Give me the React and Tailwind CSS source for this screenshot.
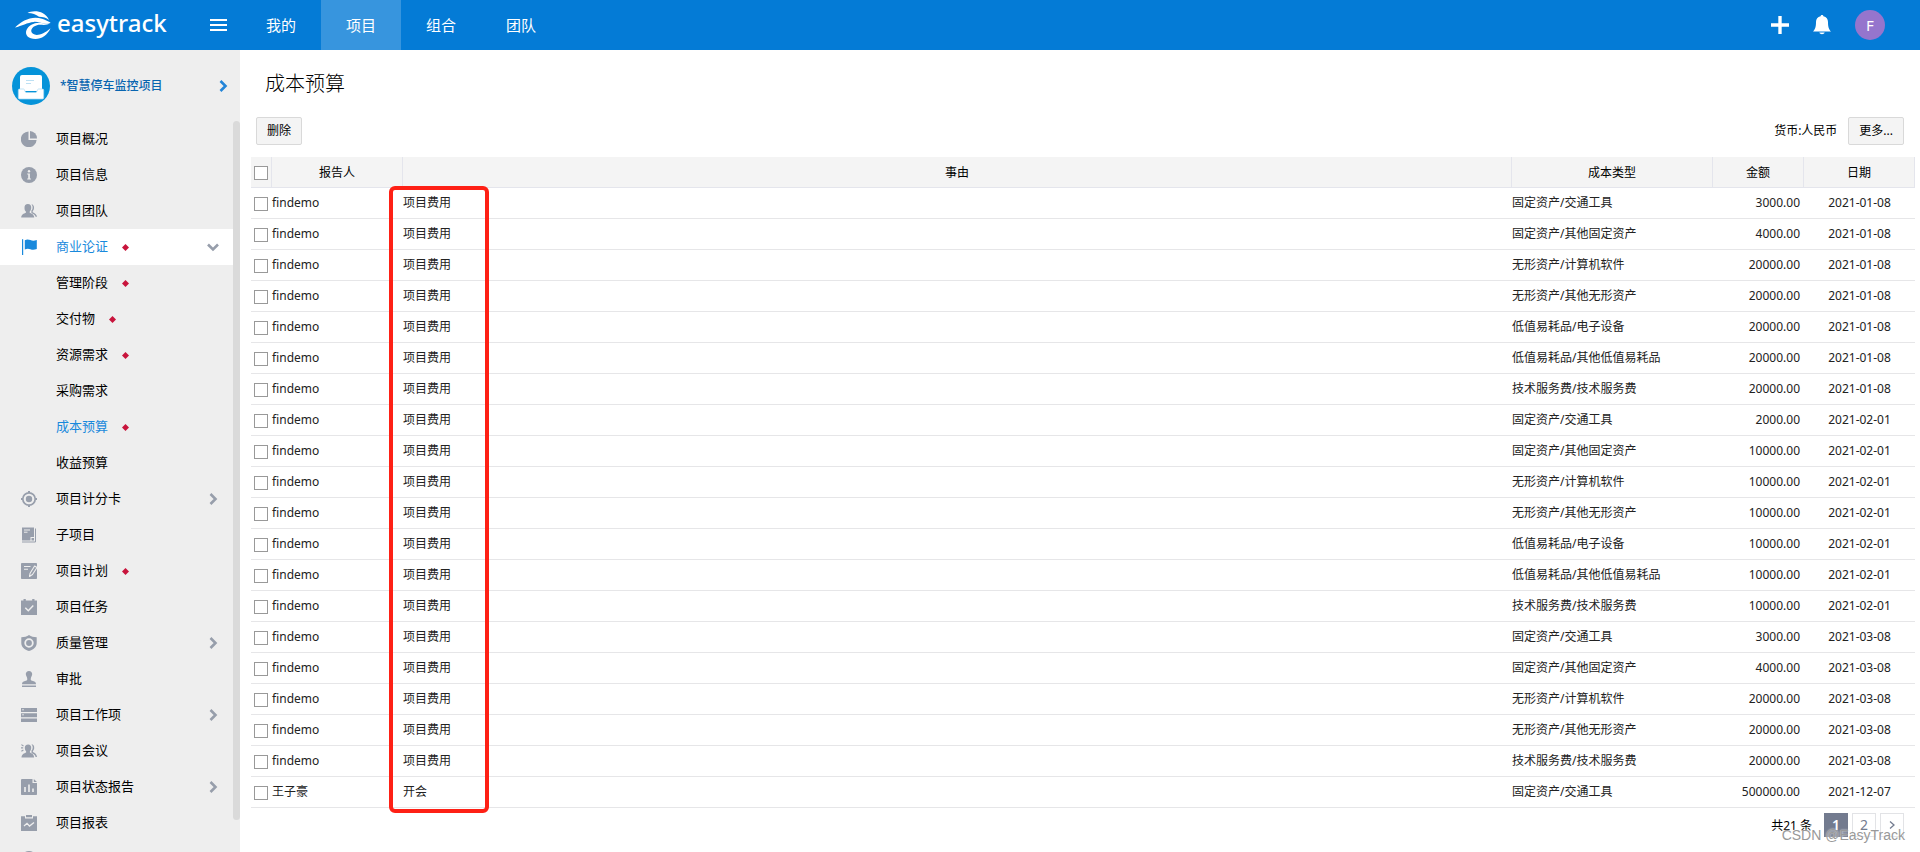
import clsx from 'clsx';

const topNav = [
  { label: '我的' },
  { label: '项目', active: true },
  { label: '组合' },
  { label: '团队' }
];

const sideMenu = [
  { label: '项目概况', icon: PieIcon },
  { label: '项目信息', icon: InfoIcon },
  { label: '项目团队', icon: TeamIcon },
  { label: '商业论证', icon: FlagIcon, dot: true, open: true },
  { label: '管理阶段', dot: true },
  { label: '交付物', dot: true },
  { label: '资源需求', dot: true },
  { label: '采购需求' },
  { label: '成本预算', dot: true, active: true },
  { label: '收益预算' },
  { label: '项目计分卡', icon: TargetIcon, more: true },
  { label: '子项目', icon: NoteIcon },
  { label: '项目计划', icon: PlanIcon, dot: true },
  { label: '项目任务', icon: TaskIcon },
  { label: '质量管理', icon: ShieldIcon, more: true },
  { label: '审批', icon: StampIcon },
  { label: '项目工作项', icon: StackIcon, more: true },
  { label: '项目会议', icon: MeetingIcon },
  { label: '项目状态报告', icon: ReportIcon, more: true },
  { label: '项目报表', icon: ClipboardIcon }
];

const rows = [
  ['findemo', '项目费用', '固定资产/交通工具', '3000.00', '2021-01-08'],
  ['findemo', '项目费用', '固定资产/其他固定资产', '4000.00', '2021-01-08'],
  ['findemo', '项目费用', '无形资产/计算机软件', '20000.00', '2021-01-08'],
  ['findemo', '项目费用', '无形资产/其他无形资产', '20000.00', '2021-01-08'],
  ['findemo', '项目费用', '低值易耗品/电子设备', '20000.00', '2021-01-08'],
  ['findemo', '项目费用', '低值易耗品/其他低值易耗品', '20000.00', '2021-01-08'],
  ['findemo', '项目费用', '技术服务费/技术服务费', '20000.00', '2021-01-08'],
  ['findemo', '项目费用', '固定资产/交通工具', '2000.00', '2021-02-01'],
  ['findemo', '项目费用', '固定资产/其他固定资产', '10000.00', '2021-02-01'],
  ['findemo', '项目费用', '无形资产/计算机软件', '10000.00', '2021-02-01'],
  ['findemo', '项目费用', '无形资产/其他无形资产', '10000.00', '2021-02-01'],
  ['findemo', '项目费用', '低值易耗品/电子设备', '10000.00', '2021-02-01'],
  ['findemo', '项目费用', '低值易耗品/其他低值易耗品', '10000.00', '2021-02-01'],
  ['findemo', '项目费用', '技术服务费/技术服务费', '10000.00', '2021-02-01'],
  ['findemo', '项目费用', '固定资产/交通工具', '3000.00', '2021-03-08'],
  ['findemo', '项目费用', '固定资产/其他固定资产', '4000.00', '2021-03-08'],
  ['findemo', '项目费用', '无形资产/计算机软件', '20000.00', '2021-03-08'],
  ['findemo', '项目费用', '无形资产/其他无形资产', '20000.00', '2021-03-08'],
  ['findemo', '项目费用', '技术服务费/技术服务费', '20000.00', '2021-03-08'],
  ['王子豪', '开会', '固定资产/交通工具', '500000.00', '2021-12-07']
];

/* ---------- icons ---------- */

function Svg({ children, className = 'size-4' }) {
  return (
    <svg viewBox="0 0 16 16" className={clsx('shrink-0', className)} fill="currentColor" aria-hidden="true">
      {children}
    </svg>
  );
}

function PieIcon() {
  return (
    <Svg>
      <path d="M7.5 0.4A7.9 7.9 0 1 0 15.6 8.9H7.5Z" />
      <path d="M9 0A7.6 7.6 0 0 1 16 7.4H9Z" />
    </Svg>
  );
}

function InfoIcon() {
  return (
    <Svg>
      <circle cx="8" cy="8" r="8" />
      <circle cx="8" cy="4.2" r="1.2" fill="#eee" />
      <path d="M6.2 6.6h2.7v5h1v1H6.2v-1h1v-4h-1z" fill="#eee" />
    </Svg>
  );
}

function TeamIcon() {
  return (
    <Svg>
      <path d="M6.9 1C9.2 1 10.4 2.6 10.2 4.9c-.1 1.700-.8 2.900-1.500 3.600v1.300c1.900.8 4.500 1.900 4.500 4.700H.2c0-2.800 2.700-3.900 4.700-4.700V8.500C4.100 7.800 3.500 6.600 3.500 4.900 3.400 2.600 4.600 1 6.900 1Z" />
      <path d="M10.300 1.200c1.900.2 2.900 1.600 2.700 3.700-.1 1.500-.6 2.500-1.300 3.200v1.100c2 1 4.100 2 4.300 4.500h-1.400c-.4-2-2.400-2.900-4.200-3.700V7.600c.8-.7 1.200-1.700 1.200-3 .1-1.500-.4-2.700-1.300-3.400Z" />
    </Svg>
  );
}

function FlagIcon() {
  return (
    <Svg>
      <path d="M1 .2h1.200V16H1zM3.800 1.200c2-1.200 3.800-.9 5.600-.1 1.900.8 3.800.8 6.400 0v9c-2.600 1-4.500.9-6.400.2-1.800-.8-3.600-.9-5.600.3Z" />
    </Svg>
  );
}

function TargetIcon() {
  return (
    <Svg>
      <circle cx="8" cy="8" r="6.200" fill="none" stroke="currentColor" strokeWidth="1.700" />
      <circle cx="8" cy="8" r="3.200" />
      <path d="M7 0h2v2H7zM7 14h2v2H7zM0 7h2v2H0zM14 7h2v2h-2z" />
    </Svg>
  );
}

function NoteIcon() {
  return (
    <Svg>
      <path d="M1 .5h12v9.500H9.500v3.500H1z" />
      <path d="M10.500 13.500h2.500V11h-2.500z" />
      <path d="M3 3h6M3 5.200h3.500" stroke="#eee" strokeWidth="1" />
      <path d="M1 15h13.500V1.500" fill="none" stroke="currentColor" strokeWidth="1" />
    </Svg>
  );
}

function PlanIcon() {
  return (
    <Svg>
      <rect width="16" height="16" rx="0.800" />
      <path d="M3 3.500h6.500M3 6.200h4" stroke="#eee" strokeWidth="1.100" />
      <path d="m8.500 13.500.6-3.300L13.600 3l2.400 1.500-4.500 7z" fill="currentColor" stroke="#eee" strokeWidth="1.100" strokeLinejoin="round" />
    </Svg>
  );
}

function TaskIcon() {
  return (
    <Svg>
      <path d="M2.500 0h2.300v1.600h6.400V0h2.300v1.600H16V4H0V1.600h2.500zM0 4h16v12H0z" />
      <path d="m4.300 8.800 3 3 5-5.200" fill="none" stroke="#eee" strokeWidth="1.500" />
    </Svg>
  );
}

function ShieldIcon() {
  return (
    <Svg>
      <path d="M8 0c2.100 1.400 4.700 2.200 7.700 2.300V8c0 4.100-3.200 6.600-7.700 8C3.500 14.600.3 12.100.3 8V2.300C3.300 2.200 5.900 1.400 8 0Z" />
      <circle cx="8" cy="8" r="3.800" fill="none" stroke="#eee" strokeWidth="1.800" />
    </Svg>
  );
}

function StampIcon() {
  return (
    <Svg>
      <path d="M8 0c2 0 3.200 1.400 3.200 3.100 0 1.900-1.500 3-1.500 5.100 0 1.200 1 1.500 2.300 1.900 1.900.6 3 1.200 3 3.200H1c0-2 1.100-2.600 3-3.200 1.300-.4 2.300-.7 2.300-1.900 0-2.100-1.500-3.200-1.500-5.100C4.800 1.400 6 0 8 0ZM1 14.600h14V16H1z" />
    </Svg>
  );
}

function StackIcon() {
  return (
    <Svg>
      <path d="M0 1h16v4H0zM0 6.200h16v4H0zM0 11.400h16v3.600H0z" />
      <path d="M1.200 2.800h1.600M1.200 7.800h1.600" stroke="#eee" strokeWidth="1" />
    </Svg>
  );
}

function MeetingIcon() {
  return (
    <Svg>
      <path d="M7.200 1.500c2 0 3.200 1.400 3 3.500-.1 1.500-.6 2.600-1.300 3.300v1.200c1.700.8 4.200 1.800 4.200 5H.5c0-3.200 2.900-4.200 4.600-5V8.300c-.7-.7-1.200-1.800-1.300-3.300-.2-2.100 1.300-3.500 3.400-3.500Z" />
      <path d="M10.300 1.300c2 .1 3.100 1.600 2.900 3.700-.1 1.400-.6 2.400-1.300 3.100v1c2 .9 4 2.300 4.100 5h-1.400c-.3-2.500-2.200-3.300-4.100-4.200V7.600c.7-.7 1.100-1.700 1.200-2.900 0-1.500-.4-2.700-1.400-3.400Z" />
      <path d="M.4 1.600 2.500 3M0 4.900h2.200M.4 8.200l2-1.200" stroke="currentColor" strokeWidth="1.100" />
    </Svg>
  );
}

function ReportIcon() {
  return (
    <Svg>
      <path d="M1 0h10.500v4H16v11.200a.8.8 0 0 1-.8.800H.8a.8.8 0 0 1-.8-.8V1a1 1 0 0 1 1-1ZM12.800 0 16 2.900h-3.200z" />
      <path d="M4 13V8M8 13V5.500M12 13V9.500" stroke="#eee" strokeWidth="1.600" />
    </Svg>
  );
}

function ClipboardIcon() {
  return (
    <Svg>
      <path d="M0 1.200h4v2.300h8V1.200h4V16H0zM5 0h6v2.300H5z" />
      <path d="m3 11 3-2.700 2.500 2.700 4.500-3.500" fill="none" stroke="#eee" strokeWidth="1.300" />
    </Svg>
  );
}

function Chevron({ className }) {
  return (
    <svg viewBox="0 0 12 12" className={clsx('size-3 shrink-0', className)} fill="none" stroke="currentColor" strokeWidth="2.600" aria-hidden="true">
      <path d="m3.500 1 5 5-5 5" />
    </svg>
  );
}

function Diamond() {
  return (
    <svg viewBox="0 0 7 7" className="size-[7px] ml-3.5 text-[#c8143c]" fill="currentColor" aria-hidden="true">
      <path d="M3.500 0 7 3.500 3.500 7 0 3.500z" />
    </svg>
  );
}

function Logo() {
  return (
    <a href="#" className="flex items-center gap-1.5 text-white">
      <svg viewBox="0 0 36 28" className="w-9 h-7" fill="currentColor" aria-hidden="true">
        <path d="M12.500 2C17-1 30-1.200 34 9c-2.500-2.500-6-3-10-3.200C21 3.600 17 1.900 12.500 2Z" />
        <path d="M0 16.500C7 9.500 17 4.500 27 7.800c3 .9 5.500 2.500 8.700 3.600C30 14.800 25 10.500 19 10.900 12 11.500 7 14.800 0 16.500Z" />
        <path d="M35.500 12.200c-5 3-9.500.8-13.500 2-5.500 1.500-7.500 6-4 8.600 3.500 2.500 10.500.7 17.500-5.600C32.500 24 26.500 28 20.500 28 13.500 28 9.500 24 11.500 19c2-4.500 7-7.200 12.500-7.300 4 0 7 1.500 11.500.5Z" />
      </svg>
      <span className="pb-1 text-2xl leading-7 font-medium">easytrack</span>
    </a>
  );
}

/* ---------- layout ---------- */

function TopBar() {
  return (
    <header className="flex h-[50px] shrink-0 bg-[#047bd6] text-white">
      <div className="flex w-[241px] shrink-0 items-center justify-between pr-3.5 pl-[15px]">
        <Logo />
        <button type="button" aria-label="菜单" className="flex w-[17px] flex-col gap-[3px]">
          <span className="h-0.5 bg-white" />
          <span className="h-0.5 bg-white" />
          <span className="h-0.5 bg-white" />
        </button>
      </div>
      <nav className="flex">
        {topNav.map((item) => (
          <a
            key={item.label}
            href="#"
            className={clsx('flex w-20 items-center justify-center text-[15px]', item.active && 'bg-[#3795de]')}
          >
            {item.label}
          </a>
        ))}
      </nav>
      <div className="ml-auto flex items-center gap-6 pr-[35px]">
        <button type="button" aria-label="新建">
          <Svg className="size-[18px]">
            <path d="M6.500 0h3v6.500H16v3H9.500V16h-3V9.500H0v-3h6.500z" />
          </Svg>
        </button>
        <button type="button" aria-label="通知">
          <svg viewBox="0 0 18 20" className="h-5 w-[18px]" fill="currentColor" aria-hidden="true">
            <path d="M9 0c.8 0 1.300.5 1.400 1.200C13.500 1.900 15 4.200 15 7c0 5 .8 7.200 3 9.500H0C2.200 14.200 3 12 3 7c0-2.800 1.500-5.100 4.600-5.800C7.700.5 8.200 0 9 0ZM6.300 17.500h5.400c-.4 1-1.400 1.700-2.700 1.700s-2.300-.7-2.700-1.700Z" />
          </svg>
        </button>
        <button type="button" className="size-[30px] rounded-full bg-[#9575cd] text-[15px] leading-[30px]">
          F
        </button>
      </div>
    </header>
  );
}

function MenuItem({ label, icon: Icon, dot, open, active, more }) {
  return (
    <li>
      <a
        href="#"
        className={clsx(
          'flex h-9 items-center pl-[21px] pr-3.5 text-[13px]',
          open && 'bg-white',
          open || active ? 'text-[#1989dc]' : 'text-black'
        )}
      >
        <span className={clsx('mr-[19px] size-4 shrink-0', !open && 'text-[#979eab]')}>{Icon && <Icon />}</span>
        {label}
        {dot && <Diamond />}
        {open && <Chevron className="ml-auto rotate-90 text-[#979eab]" />}
        {more && <Chevron className="ml-auto text-[#979eab]" />}
      </a>
    </li>
  );
}

function Sidebar() {
  return (
    <aside className="flex w-60 shrink-0 flex-col bg-[#eee]">
      <a href="#" className="flex h-[71px] shrink-0 items-center pr-[11px] pl-3 text-xs font-medium text-[#0865b0]">
        <svg viewBox="0 0 38 38" className="mr-2.5 size-[38px]" aria-hidden="true">
          <circle cx="19" cy="19" r="19" fill="#0593d9" />
          <path d="M10 8h18a2 2 0 0 1 2 2v14H8V10a2 2 0 0 1 2-2Z" fill="#fff" />
          <path d="M14 13.500h8M14 16.500h5" stroke="#b5dcf2" strokeWidth="0.900" />
          <path
            d="M7.500 22h4c1.500 0 1 3.500 3 3.500h9c2 0 1.500-3.500 3-3.500h4a1.200 1.200 0 0 1 1.200 1.200v7.600a1.200 1.200 0 0 1-1.200 1.200h-23a1.200 1.200 0 0 1-1.200-1.200v-7.600A1.200 1.200 0 0 1 7.500 22Z"
            fill="#fff"
            stroke="#a8d8f2"
            strokeWidth="0.700"
          />
        </svg>
        *智慧停车监控项目
        <Chevron className="ml-auto text-[#2385d8]" />
      </a>
      <div className="flex min-h-0 flex-1 overflow-hidden">
        <ul className="flex-1">
          {sideMenu.map((item) => (
            <MenuItem key={item.label} {...item} />
          ))}
          <li className="flex h-9 items-center pl-[21px] text-[#979eab]">
            <InfoIcon />
          </li>
        </ul>
        <div className="mb-8 w-[7px] rounded-full bg-[#dadada]" />
      </div>
    </aside>
  );
}

function Check({ label }) {
  return (
    <input
      type="checkbox"
      aria-label={label}
      className="mx-[3px] mt-0.5 block size-3.5 appearance-none border border-[#999] bg-white"
    />
  );
}

function CostTable() {
  const th = 'border-r border-[#e4e5ec] pt-0.5 font-normal';
  return (
    <div className="relative">
      <table className="w-full table-fixed border-separate border-spacing-0 text-xs text-[#222]">
        <colgroup>
          <col className="w-[21px]" />
          <col className="w-[131px]" />
          <col />
          <col className="w-[201px]" />
          <col className="w-[91px]" />
          <col className="w-[111px]" />
        </colgroup>
        <thead className="bg-[#f4f4f4] text-black">
          <tr className="h-[31px] [&>th]:border-b">
            <th className="border-r border-[#e4e5ec]">
              <Check label="全选" />
            </th>
            <th className={th}>报告人</th>
            <th className={th}>事由</th>
            <th className={th}>成本类型</th>
            <th className={th}>金额</th>
            <th className={th}>日期</th>
          </tr>
        </thead>
        <tbody>
          {rows.map(([reporter, reason, type, amount, date], i) => (
            <tr key={i} className="h-[31px] [&>td]:border-b [&>td]:border-[#e6e6e8]">
              <td>
                <Check label={`选择第${i + 1}行`} />
              </td>
              <td>{reporter}</td>
              <td>{reason}</td>
              <td>{type}</td>
              <td className="pr-1 text-right">{amount}</td>
              <td className="text-center">{date}</td>
            </tr>
          ))}
        </tbody>
      </table>
      {/* highlight around the reason column */}
      <div className="pointer-events-none absolute top-[29px] -bottom-[5px] left-[138px] w-[100px] rounded-md border-4 border-[#fe2015]" />
    </div>
  );
}

function Pager() {
  const page = 'size-6 border border-[#e2e3e6] text-sm leading-5 text-[#737b8f]';
  return (
    <div className="relative mt-[5px] flex items-center justify-end gap-1 pr-[11px]">
      <span className="mr-2 pt-0.5 text-xs">共21 条</span>
      <button type="button" className="size-6 bg-[#737b8f] text-sm font-semibold text-white">1</button>
      <button type="button" className={page}>2</button>
      <button type="button" aria-label="下一页" className={clsx(page, 'flex items-center justify-center')}>
        <svg viewBox="0 0 8 8" className="size-2" fill="none" stroke="currentColor" strokeWidth="1.300" aria-hidden="true">
          <path d="m2 .5 4 3.500-4 3.500" />
        </svg>
      </button>
      <span className="absolute top-3 right-2.5 font-['Liberation_Sans',sans-serif] text-sm text-[#999] [text-shadow:0_0_2px_#fff]">
        CSDN @EasyTrack
      </span>
    </div>
  );
}

function Button({ children }) {
  return (
    <button type="button" className="h-7 rounded-xs border border-[#d9d9d9] bg-[#f4f4f4] px-2.5 text-xs text-black">
      {children}
    </button>
  );
}

export default function App() {
  return (
    <div className="flex h-screen flex-col overflow-hidden bg-white font-['Noto_Sans','Noto_Sans_CJK_SC',sans-serif] text-black">
      <TopBar />
      <div className="flex min-h-0 flex-1">
        <Sidebar />
        <main className="min-w-0 flex-1 pr-[5px] pl-[11px]">
          <h1 className="pt-5 pl-3.5 text-xl leading-7 font-light">成本预算</h1>
          <div className="mt-[19px] mb-3 flex items-center justify-between pr-[11px] pl-[5px]">
            <Button>删除</Button>
            <div className="flex items-center gap-[11px] text-xs">
              <span>货币:人民币</span>
              <Button>更多...</Button>
            </div>
          </div>
          <CostTable />
          <Pager />
        </main>
      </div>
    </div>
  );
}
